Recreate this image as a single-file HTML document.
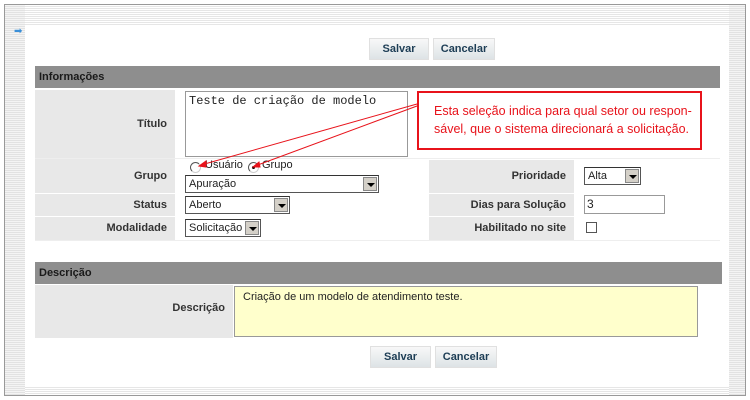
<!DOCTYPE html>
<html><head><meta charset="utf-8"><style>
*{box-sizing:border-box;margin:0;padding:0}
body{width:750px;height:400px;background:#fff;position:relative;overflow:hidden;font-family:"Liberation Sans",Arial,sans-serif;font-size:11px;color:#222}
.a{position:absolute}
.stripe{background:repeating-linear-gradient(#fff 0 1px,#e6e6e6 1px 2px)}
.vstripe{background:repeating-linear-gradient(#f4f4f4 0 1px,#e2e2e2 1px 2px)}
.btn{position:absolute;height:22px;background:linear-gradient(#f8f8f8,#dde3e6);border:1px solid #e0e0e0;color:#1d3d55;font-weight:bold;font-size:11px;text-align:center;line-height:20px}
.hdr{position:absolute;background:#8e8e8e;color:#1a1a1a;font-weight:bold;font-size:11px;padding-left:4px;line-height:22px}
.lab{position:absolute;background:#e8e8e8;font-weight:bold;text-align:right;padding-right:8px;color:#333}
.sel{position:absolute;height:18px;border:1px solid #555;border-top-color:#333;background:#fff;font-size:11px;padding-left:3px;line-height:16px}
.sel i{position:absolute;right:1px;top:1px;width:14px;height:14px;background:#d4d0c8;border:1px solid #888}
.sel i:after{content:"";position:absolute;left:3px;top:5px;border:4px solid transparent;border-top:4px solid #000;border-bottom:0}
.line{position:absolute;height:1px;background:#eee}
.rad{position:absolute;width:11px;height:11px;border-radius:50%;border:1px solid #555;border-right-color:#ccc;border-bottom-color:#ccc;background:#fff}
</style></head><body>
<div class="a" style="left:4px;top:4px;width:742px;height:392px;border:1px solid #999"></div>
<div class="a vstripe" style="left:5px;top:5px;width:20px;height:390px"></div>
<div class="a vstripe" style="left:729px;top:5px;width:16px;height:390px"></div>
<div class="a stripe" style="left:25px;top:5px;width:704px;height:20px"></div>
<div class="a stripe" style="left:25px;top:386px;width:704px;height:9px"></div>
<div class="a" style="left:14px;top:26px;color:#3a8fd8;font-size:10px">&#x27A1;</div>

<div class="btn" style="left:369px;top:38px;width:60px">Salvar</div>
<div class="btn" style="left:433px;top:38px;width:62px">Cancelar</div>

<div class="hdr" style="left:35px;top:66px;width:685px">Informações</div>
<div class="lab" style="left:35px;top:90px;width:140px;height:68px;line-height:68px">Título</div>
<div class="a" style="left:185px;top:91px;width:223px;height:66px;border:1px solid #999;font-family:'Liberation Mono',monospace;font-size:12px;padding:2px 3px">Teste de criação de modelo</div>
<div class="line" style="left:35px;top:158px;width:685px"></div>
<div class="lab" style="left:35px;top:159px;width:140px;height:34px;line-height:34px">Grupo</div>
<div class="rad" style="left:190px;top:162px"></div>
<div class="a" style="left:205px;top:159px;font-size:11px">Usuário</div>
<div class="rad" style="left:248px;top:162px"><div style="position:absolute;left:3px;top:3px;width:3px;height:3px;background:#000;border-radius:50%"></div></div>
<div class="a" style="left:262px;top:159px;font-size:11px">Grupo</div>
<div class="sel" style="left:185px;top:175px;width:194px">Apuração<i></i></div>
<div class="lab" style="left:35px;top:194px;width:140px;height:22px;line-height:22px">Status</div>
<div class="sel" style="left:185px;top:196px;width:105px">Aberto<i></i></div>
<div class="lab" style="left:35px;top:217px;width:140px;height:23px;line-height:23px">Modalidade</div>
<div class="sel" style="left:185px;top:219px;width:76px">Solicitação<i></i></div>

<div class="lab" style="left:429px;top:160px;width:145px;height:33px;line-height:33px">Prioridade</div>
<div class="sel" style="left:584px;top:167px;width:57px">Alta<i></i></div>
<div class="lab" style="left:429px;top:194px;width:145px;height:22px;line-height:22px">Dias para Solução</div>
<div class="a" style="left:584px;top:195px;width:81px;height:19px;border:1px solid #999;font-size:12px;padding-left:2px;line-height:17px">3</div>
<div class="lab" style="left:429px;top:217px;width:145px;height:23px;line-height:23px">Habilitado no site</div>
<div class="a" style="left:586px;top:222px;width:11px;height:11px;border:1px solid #555;background:#fff"></div>
<div class="line" style="left:35px;top:240px;width:685px"></div>

<div class="a" style="left:417px;top:91px;width:285px;height:59px;border:2px solid #e8131b;background:#fff;color:#e8131b;font-size:12.5px;line-height:18px;padding:9px 0 0 15px">Esta seleção indica para qual setor ou respon-<br>sável, que o sistema direcionará a solicitação.</div>
<svg class="a" style="left:0;top:0" width="750" height="400"><g stroke="#e8131b" stroke-width="1" fill="#e8131b"><line x1="417" y1="104" x2="201" y2="165"/><line x1="417" y1="106" x2="255" y2="166"/><polygon points="199,166 206,161 206,167"/><polygon points="253,167 259,162 260,167"/></g></svg>

<div class="hdr" style="left:35px;top:262px;width:687px">Descrição</div>
<div class="lab" style="left:35px;top:285px;width:198px;height:53px;line-height:46px">Descrição</div>
<div class="a" style="left:234px;top:286px;width:464px;height:51px;border:1px solid #999;background:#ffffcc;padding:4px 8px;font-size:11px">Criação de um modelo de atendimento teste.</div>

<div class="btn" style="left:370px;top:346px;width:61px">Salvar</div>
<div class="btn" style="left:435px;top:346px;width:62px">Cancelar</div>
</body></html>
